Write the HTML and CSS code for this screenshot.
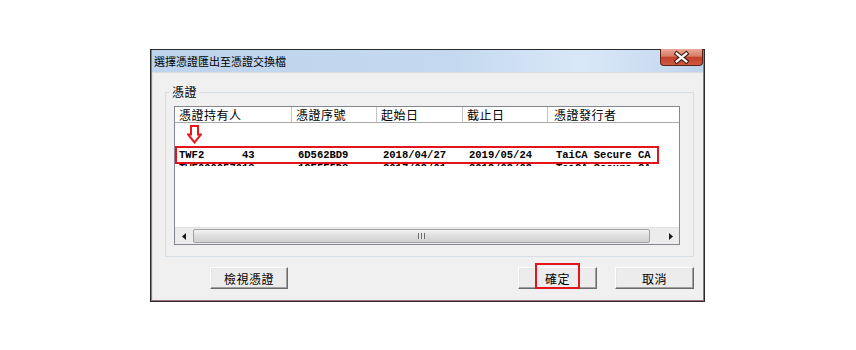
FILE: index.html
```html
<!DOCTYPE html>
<html lang="zh-Hant">
  <head>
    <meta charset="UTF-8" />
    <meta name="viewport" content="width=device-width, initial-scale=1.0" />
    <title>選擇憑證匯出至憑證交換檔</title>
    <link rel="stylesheet" href="styles.css">
  </head>
  <body>
    <div class="window">
      <div class="title-bar">
        <span class="title">選擇憑證匯出至憑證交換檔</span>
        <button class="close-btn" aria-label="close">
          <svg width="43" height="17" viewBox="0 0 43 17">
            <path d="M16.5 4.5 L26.5 12.5 M26.5 4.5 L16.5 12.5" stroke="#4a1a12" stroke-width="4.6" stroke-linecap="square" fill="none" />
            <path d="M16.5 4.5 L26.5 12.5 M26.5 4.5 L16.5 12.5" stroke="#ffffff" stroke-width="2.4" stroke-linecap="square" fill="none" />
          </svg>
        </button>
      </div>

      <div class="client">
        <fieldset class="cert-group">
          <legend>憑證</legend>
          <div class="list-view">
            <div class="list-header">
              <div class="col c1">憑證持有人</div>
              <div class="col c2">憑證序號</div>
              <div class="col c3">起始日</div>
              <div class="col c4">截止日</div>
              <div class="col c5">憑證發行者</div>
            </div>

            <div class="list-body">
              <div class="marker">
                <svg width="15" height="19" viewBox="0 0 15 19">
                  <path d="M4 1 H11 V9.5 H14 L7.5 17.5 L1 9.5 H4 Z" stroke="#e8161d" stroke-width="2" fill="none" stroke-linejoin="miter" />
                </svg>
              </div>
              <div class="row selected">
                <span class="cell c1">TWF2      43</span>
                <span class="cell c2">6D562BD9</span>
                <span class="cell c3">2018/04/27</span>
                <span class="cell c4">2019/05/24</span>
                <span class="cell c5">TaiCA Secure CA</span>
              </div>
              <div class="row-clip">
                <div class="row">
                  <span class="cell c1">TWF000057018</span>
                  <span class="cell c2">1CE5E5D8</span>
                  <span class="cell c3">2017/09/01</span>
                  <span class="cell c4">2019/09/09</span>
                  <span class="cell c5">TaiCA Secure CA</span>
                </div>
              </div>
            </div>

            <div class="h-scroll">
              <span class="arrow-btn left">
                <svg width="4" height="7" viewBox="0 0 4 7"><path d="M4 0 V7 L0 3.5 Z" fill="#1a1a1a" /></svg>
              </span>
              <div class="thumb"><span class="grip"></span></div>
              <span class="track"></span>
              <span class="arrow-btn right">
                <svg width="4" height="7" viewBox="0 0 4 7"><path d="M0 0 V7 L4 3.5 Z" fill="#1a1a1a" /></svg>
              </span>
            </div>
          </div>
        </fieldset>

        <div class="button-row">
          <button class="btn view-btn">檢視憑證</button>
          <button class="btn ok-btn">確定<span class="mark"></span></button>
          <button class="btn">取消</button>
        </div>
      </div>
    </div>
  </body>
</html>
```

FILE: styles.css
```css
* {
  box-sizing: border-box;
}

body {
  margin: 0;
  background-color: #ffffff;
  font-family: "Noto Sans CJK TC", "Noto Sans", sans-serif;
  font-size: 12px;
  color: #000;
}

.window {
  width: 555px;
  height: 253px;
  margin: 49px 0 0 150px;
  border: 1px solid #2b2b2b;
  padding: 0 1px 1px;
  background-color: #9b7382;
  display: flex;
  flex-direction: column;
}

.title-bar {
  height: 22px;
  display: flex;
  align-items: flex-start;
  justify-content: space-between;
  background: linear-gradient(90deg, #bed4ec 0%, #c4d9ef 55%, #d9e8f8 78%, #cadcf1 92%, #bdd3eb 100%);
}

.title {
  padding-left: 2px;
  font-size: 11px;
  line-height: 22px;
}

.close-btn {
  width: 43px;
  height: 17px;
  margin-top: -1px;
  padding: 0;
  border: 1px solid #5b2218;
  border-top: none;
  border-radius: 0 0 4px 4px;
  background: linear-gradient(#e9aa9a, #d87a66 45%, #c2412a 52%, #cf5a40 100%);
  display: flex;
}

.client {
  flex: 1;
  background-color: #f0f0f0;
  border-top: 1px solid #dcdcdc;
  border-left: 1px solid #e3e3e3;
  padding: 0 9px 0 12px;
  letter-spacing: 0.5px;
}

.cert-group {
  margin: 12px 0 0;
  padding: 7px 12px 11px 4px;
  border: 1px solid #d5dfe5;
  min-width: 0;
}

.cert-group legend {
  padding: 0 2px;
  line-height: 14px;
}

.list-view {
  width: 506px;
  height: 139px;
  margin-left: 4px;
  border: 1px solid #828790;
  background-color: #fff;
  display: flex;
  flex-direction: column;
  letter-spacing: 0;
}

.list-header {
  height: 16px;
  display: flex;
  border-bottom: 1px solid #a9a9a9;
  line-height: 15px;
  letter-spacing: 0.5px;
}

.list-header .col {
  border-right: 1px solid #c4c4c4;
  padding-left: 4px;
  white-space: nowrap;
  overflow: hidden;
}

.list-header .c1 { width: 117px; }
.list-header .c2 { width: 85px; }
.list-header .c3 { width: 86px; }
.list-header .c4 { width: 85px; }
.list-header .c5 { flex: 1; border-right: none; padding-left: 6px; }

.list-body {
  flex: 1;
}

.marker {
  height: 23px;
  padding: 2px 0 0 12px;
}

.marker svg {
  display: block;
}

.row {
  display: flex;
  font-family: "Liberation Mono", monospace;
  font-weight: bold;
  font-size: 10.5px;
  line-height: 14px;
  white-space: pre;
  border: solid transparent;
  border-width: 0 2px;
}

.row.selected {
  width: 484px;
  height: 18px;
  border: 2px solid #e3141c;
}

.row .cell { overflow: hidden; }
.row .c1 { width: 115px; padding-left: 2px; }
.row .c2 { width: 85px; padding-left: 6px; }
.row .c3 { width: 86px; padding-left: 6px; }
.row .c4 { width: 85px; padding-left: 6px; }
.row .c5 { flex: 1; padding-left: 8px; }

.row-clip {
  height: 2px;
  overflow: hidden;
}

.row-clip .row {
  margin-top: -3px;
}

.h-scroll {
  height: 17px;
  display: flex;
  background-color: #ececec;
  border-top: 1px solid #e2e2e2;
}

.arrow-btn {
  display: flex;
  align-items: center;
  justify-content: center;
}

.arrow-btn.left { width: 18px; }
.arrow-btn.right { width: 17px; }

.thumb {
  width: 457px;
  margin: 1px 0;
  border: 1px solid #a2a2a2;
  border-radius: 2px;
  background: linear-gradient(#f3f3f3, #dedede 50%, #d2d2d2);
  display: flex;
  align-items: center;
  justify-content: center;
}

.grip {
  width: 7px;
  height: 6px;
  background: repeating-linear-gradient(90deg, #6b6b6b 0 1px, #e8e8e8 1px 3px);
}

.track {
  width: 12px;
}

.button-row {
  display: flex;
  gap: 18px;
  margin-top: 10px;
  padding-left: 45px;
}

.btn {
  position: relative;
  width: 79px;
  height: 22px;
  padding: 0;
  border: 1px solid;
  border-color: #ffffff #6a6a6a #6a6a6a #ffffff;
  box-shadow: inset -1px -1px #a0a0a0, inset 1px 1px #e6e6e6;
  background-color: #ececec;
  font-family: "Noto Sans CJK TC", "Noto Sans", sans-serif;
  font-size: 12px;
  letter-spacing: 0.5px;
  color: #000;
}

.view-btn {
  width: 78px;
}

.ok-btn {
  margin-left: auto;
}

.ok-btn .mark {
  position: absolute;
  left: 16px;
  top: -5px;
  width: 45px;
  height: 26px;
  border: 2px solid #e3141c;
}
```
